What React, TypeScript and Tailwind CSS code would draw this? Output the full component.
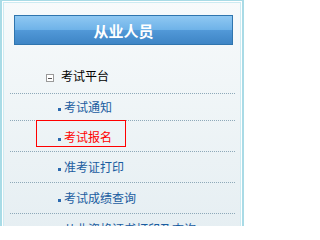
import React from "react";

const items = [
  { label: "考试通知", active: false },
  { label: "考试报名", active: true },
  { label: "准考证打印", active: false },
  { label: "考试成绩查询", active: false },
  { label: "从业资格证书打印及查询", active: false },
];

function Bullet({ red }: { red?: boolean }) {
  return (
    <span
      className={`mt-[8px] h-[3px] w-[3px] shrink-0 ${red ? "bg-[#2c6ab0]" : "bg-[#2c6ab0]"}`}
    />
  );
}

export default function App() {
  return (
    <div
      className="h-[226px] w-[245px] overflow-hidden bg-white"
      style={{ fontFamily: '"Noto Sans CJK SC", "Noto Sans", sans-serif' }}
    >
      <div className="h-[240px] w-[244px] border-l-2 border-r-2 border-t border-[#a9dbe6] p-[1px]">
        <div className="h-full border-l border-r border-t border-[#cdebf2] bg-gradient-to-b from-[#f7fafb] to-[#e5eef2]">
          {/* Header */}
          <div className="ml-[10px] mt-[12px] flex h-[30px] w-[219px] items-center justify-center border border-[#2f75ae] bg-[linear-gradient(#8fc8f2,#6eb2e8_50%,#5299d8_50%,#3e85c5)]">
            <span className="text-[15px] font-bold leading-none tracking-[0px] text-white">从业人员</span>
          </div>

          {/* Section title */}
          <div className="ml-[6px] mr-[5px] h-[49px] border-b border-dotted border-[#8ea9b9] pt-[24px]">
            <div className="flex items-center pl-[36px]">
              <span className="mt-[4px] flex h-[8px] w-[8px] items-center justify-center border border-[#9a9a9a] bg-white">
                <span className="h-[1px] w-[4px] bg-[#555]" />
              </span>
              <span className="ml-[7px] text-[12px] leading-[14px] text-black">考试平台</span>
            </div>
          </div>

          {/* Items */}
          <div className="ml-[6px] mr-[5px]">
            <div className="h-[27px] border-b border-dotted border-[#8ea9b9] pt-[6px]">
              <div className="flex pl-[48px]">
                <Bullet />
                <span className="ml-[3px] text-[12px] leading-[14px] text-[#1a5ca0]">{items[0].label}</span>
              </div>
            </div>
            <div className="h-[32px] border-b border-dotted border-[#8ea9b9]">
              <div className="-mt-[1px] ml-[26px] h-[27px] w-[90px] border border-[#ff0000] pl-[21px] pt-[9px]">
                <div className="flex">
                  <Bullet />
                  <span className="ml-[3px] text-[12px] leading-[14px] text-[#ff0000]">{items[1].label}</span>
                </div>
              </div>
            </div>
            {items.slice(2).map((it, i) => (
              <div
                key={it.label}
                className={`h-[31px] pt-[8px] ${i < 2 ? "border-b border-dotted border-[#8ea9b9]" : ""}`}
              >
                <div className="flex pl-[48px]">
                  <Bullet />
                  <span className="ml-[3px] whitespace-nowrap text-[12px] leading-[14px] text-[#1a5ca0]">{it.label}</span>
                </div>
              </div>
            ))}
          </div>
        </div>
      </div>
    </div>
  );
}
